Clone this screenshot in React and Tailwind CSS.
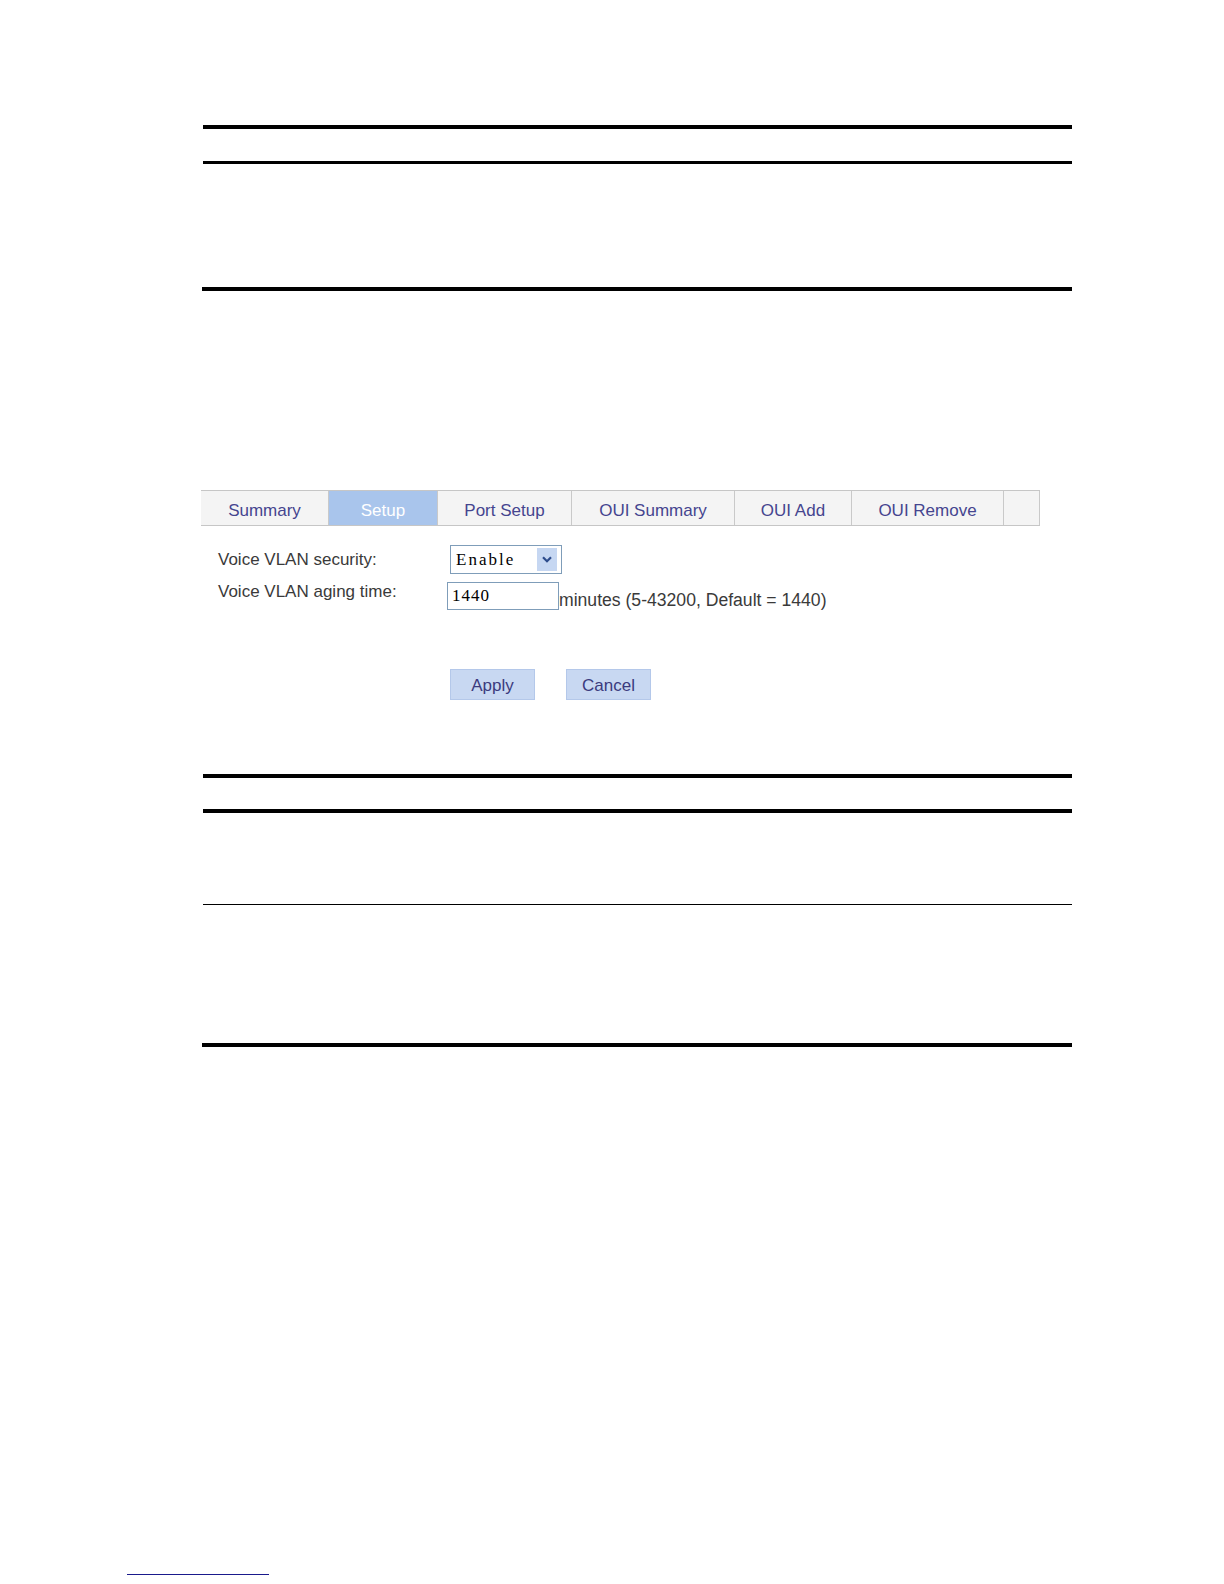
import React from "react";

const tabs = [
  { label: "Summary", w: "w-[128px]" },
  { label: "Setup", w: "w-[109px]", active: true },
  { label: "Port Setup", w: "w-[134px]" },
  { label: "OUI Summary", w: "w-[163px]" },
  { label: "OUI Add", w: "w-[117px]" },
  { label: "OUI Remove", w: "w-[152px]" },
  { label: "", w: "w-[36px]" },
];

export default function App() {
  return (
    <div className="min-h-[1584px] w-[1224px] bg-white font-['Liberation_Sans',Arial,sans-serif]">
      <div className="pl-[203px] pt-[125px]">
        <div className="h-[4px] w-[869px] bg-black" />
        <div className="mt-[32px] h-[3px] w-[869px] bg-black" />
        <div className="-ml-px mt-[123px] h-[4px] w-[870px] bg-black" />

        {/* Tab bar */}
        <div className="-ml-[2px] mt-[199px] flex h-[36px] w-[839px] border-y border-[#c6c6c6] bg-[#f4f4f4]">
          {tabs.map((t, i) => (
            <div
              key={i}
              className={`${t.w} flex items-center justify-center border-r border-[#c9c9c9] pt-[6px] text-[17px] ${
                t.active ? "bg-[#a9c5ec] text-white" : "text-[#45458f]"
              }`}
            >
              {t.label}
            </div>
          ))}
        </div>

        {/* Form */}
        <div className="ml-[15px] mt-[19px] flex flex-col text-[17px] text-[#3a3a3a]">
          <div className="flex items-center">
            <div className="w-[232px]">Voice VLAN security:</div>
            <div className="flex h-[29px] w-[112px] items-center justify-between border border-[#7f9db9] bg-white pl-[5px] pr-[4px]">
              <span className="font-['Liberation_Serif',serif] text-[17px] tracking-[2px] text-black">Enable</span>
              <span className="flex h-[23px] w-[20px] items-center justify-center bg-[#c6d7f2]">
                <svg width="10" height="7" viewBox="0 0 10 7">
                  <path d="M1 1.2 L5 5.2 L9 1.2" fill="none" stroke="#2d4c8c" strokeWidth="2.2" />
                </svg>
              </span>
            </div>
          </div>
          <div className="mt-[8px] flex">
            <div className="w-[229px] leading-[20px]">Voice VLAN aging time:</div>
            <div className="flex h-[28px] w-[112px] items-center border border-[#7f9db9] bg-white pl-[4px] font-['Liberation_Serif',serif] text-[17px] tracking-[1px] text-black">
              1440
            </div>
            <div className="self-end text-[17.6px] leading-[20px]">minutes (5-43200, Default = 1440)</div>
          </div>

          <div className="ml-[232px] mt-[59px] flex gap-[31px]">
            <div className="flex h-[31px] w-[85px] items-center justify-center border border-[#b4c8ea] bg-[#c8d8f2] pt-[3px] text-[#3b3b7e]">
              Apply
            </div>
            <div className="flex h-[31px] w-[85px] items-center justify-center border border-[#b4c8ea] bg-[#c8d8f2] pt-[3px] text-[#3b3b7e]">
              Cancel
            </div>
          </div>
        </div>

        <div className="mt-[74px] h-[4px] w-[869px] bg-black" />
        <div className="mt-[31px] h-[4px] w-[869px] bg-black" />
        <div className="mt-[91px] h-px w-[869px] bg-black" />
        <div className="-ml-px mt-[138px] h-[4px] w-[870px] bg-black" />

        <div className="-ml-[76px] mt-[527px] h-px w-[142px] bg-[#1a1a8c]" />
      </div>
    </div>
  );
}
